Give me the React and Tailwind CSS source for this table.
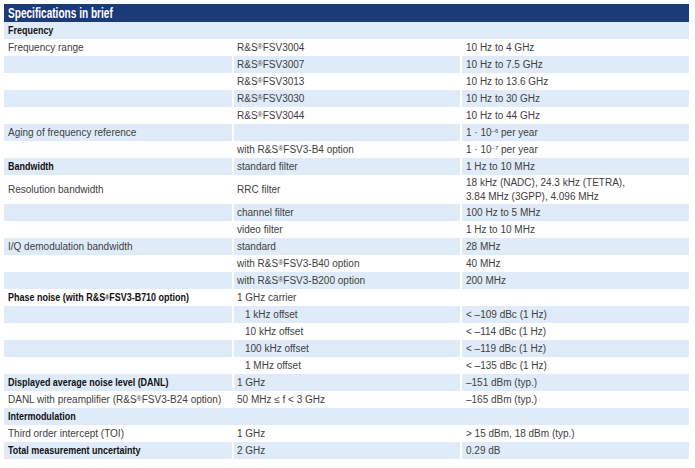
import React from 'react';

const R = () => <sup className="text-[7px] relative -top-[1px]">®</sup>;

// kind: 'section' spans all columns, 'bold' = bold first cell
const rows = [
  { kind: 'section', a: 'Frequency' },
  { a: 'Frequency range', b: <>R&S<R />FSV3004</>, c: '10 Hz to 4 GHz' },
  { a: '', b: <>R&S<R />FSV3007</>, c: '10 Hz to 7.5 GHz' },
  { a: '', b: <>R&S<R />FSV3013</>, c: '10 Hz to 13.6 GHz' },
  { a: '', b: <>R&S<R />FSV3030</>, c: '10 Hz to 30 GHz' },
  { a: '', b: <>R&S<R />FSV3044</>, c: '10 Hz to 44 GHz' },
  { a: 'Aging of frequency reference', b: '', c: <>1 · 10<sup className="text-[6px]">–6</sup> per year</> },
  { a: '', b: <>with R&S<R />FSV3-B4 option</>, c: <>1 · 10<sup className="text-[6px]">–7</sup> per year</> },
  { kind: 'bold', a: 'Bandwidth', b: 'standard filter', c: '1 Hz to 10 MHz' },
  {
    tall: true,
    a: 'Resolution bandwidth',
    b: 'RRC filter',
    c: <>18 kHz (NADC), 24.3 kHz (TETRA),<br />3.84 MHz (3GPP), 4.096 MHz</>,
  },
  { a: '', b: 'channel filter', c: '100 Hz to 5 MHz' },
  { a: '', b: 'video filter', c: '1 Hz to 10 MHz' },
  { a: 'I/Q demodulation bandwidth', b: 'standard', c: '28 MHz' },
  { a: '', b: <>with R&S<R />FSV3-B40 option</>, c: '40 MHz' },
  { a: '', b: <>with R&S<R />FSV3-B200 option</>, c: '200 MHz' },
  { kind: 'bold', a: <>Phase noise (with R&S<R />FSV3-B710 option)</>, b: '1 GHz carrier', c: '' },
  { a: '', b: '1 kHz offset', indent: true, c: '< –109 dBc (1 Hz)' },
  { a: '', b: '10 kHz offset', indent: true, c: '< –114 dBc (1 Hz)' },
  { a: '', b: '100 kHz offset', indent: true, c: '< –119 dBc (1 Hz)' },
  { a: '', b: '1 MHz offset', indent: true, c: '< –135 dBc (1 Hz)' },
  { kind: 'bold', a: 'Displayed average noise level (DANL)', b: '1 GHz', c: '–151 dBm (typ.)' },
  { a: <>DANL with preamplifier (R&S<R />FSV3-B24 option)</>, b: '50 MHz ≤ f < 3 GHz', c: '–165 dBm (typ.)' },
  { kind: 'section', a: 'Intermodulation' },
  { a: 'Third order intercept (TOI)', b: '1 GHz', c: '> 15 dBm, 18 dBm (typ.)' },
  { kind: 'bold', a: 'Total measurement uncertainty', b: '2 GHz', c: '0.29 dB' },
];

// condensed bold look of the brochure typeface
const Bold = ({ children }) => (
  <span className="inline-block origin-left scale-x-[0.78] whitespace-nowrap font-bold text-[11.5px] leading-[13px] text-[#111]">
    {children}
  </span>
);

const App = () => {
  return (
    <div className="bg-white w-[695px] h-[468px] pt-[4px] pl-[4px] font-['Liberation_Sans',sans-serif] text-[10px] text-[#404040]">
      <div className="w-[685px]">
        <div className="h-[18px] bg-[#1b3a78] px-[4px] flex items-center">
          <span className="inline-block origin-left scale-x-[0.72] whitespace-nowrap font-bold text-[14px] leading-[16px] text-white">
            Specifications in brief
          </span>
        </div>
        {rows.map((r, i) => {
          const bg = i % 2 === 0 ? 'bg-[#dfebf8]' : 'bg-white';
          if (r.kind === 'section') {
            return (
              <div key={i} className={`h-[17px] ${bg} px-[4px] flex items-center`}>
                <Bold>{r.a}</Bold>
              </div>
            );
          }
          const h = r.tall ? 'h-[29px]' : 'h-[17px]';
          return (
            <div key={i} className={`flex gap-[2px] ${h}`}>
              <div className={`w-[228px] ${bg} px-[4px] flex items-center`}>
                {r.kind === 'bold' ? <Bold>{r.a}</Bold> : r.a}
              </div>
              <div className={`w-[226px] ${bg} flex items-center ${r.indent ? 'pl-[11px]' : 'px-[3px]'}`}>
                {r.b}
              </div>
              <div className={`flex-1 ${bg} px-[4px] flex items-center leading-[14px]`}>
                <span>{r.c}</span>
              </div>
            </div>
          );
        })}
      </div>
    </div>
  );
};

export default App;
